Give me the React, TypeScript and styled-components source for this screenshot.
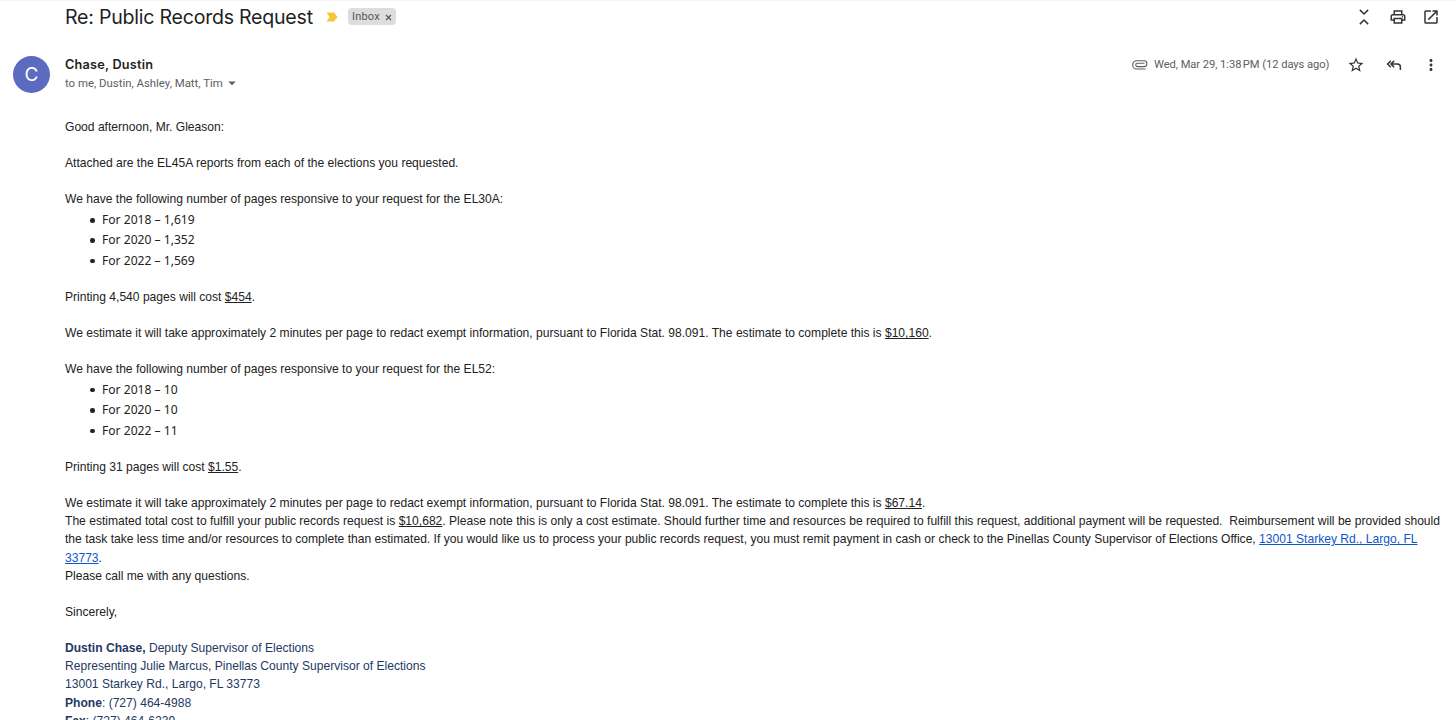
import * as React from "react";

import { MdArrowDropDown, MdMoreVert, MdOpenInNew, MdOutlinePrint, MdStarBorder } from "react-icons/md";
import styled, { createGlobalStyle } from "styled-components";

const GlobalStyle = createGlobalStyle`
    html, body {
        margin: 0;
        background: #ffffff;
        overflow: hidden;
    }
`;

const Page = styled.main`
    box-sizing: border-box;
    width: 1456px;
    height: 720px;
    overflow: hidden;
    background: #ffffff;
    border-top: 1px solid #f3f4f6;
    font-family: Roboto, Inter, sans-serif;
    color: #1f1f1f;
`;

const SubjectBar = styled.header`
    display: flex;
    align-items: center;
    height: 31px;
    padding: 0 16px 0 65px;
`;

const Subject = styled.h1`
    margin: 0;
    width: 248px;
    font-family: Inter, sans-serif;
    font-size: 19.6px;
    line-height: 26px;
    font-weight: 400;
    letter-spacing: -0.25px;
    white-space: nowrap;
`;

const ImportantMarker = styled.svg`
    width: 12px;
    height: 10px;
    margin-left: 13px;
`;

const LabelChip = styled.span`
    display: flex;
    align-items: center;
    justify-content: space-between;
    box-sizing: border-box;
    width: 48px;
    height: 17px;
    margin-left: 10px;
    padding: 0 4px;
    border-radius: 4px;
    background: #dddddd;
    color: #555555;
    font-size: 11px;
    line-height: 17px;
    letter-spacing: 0.2px;
`;

const ChipClose = styled.svg`
    width: 7px;
    height: 7px;
    margin-top: 1px;
`;

const Toolbar = styled.div<{ gap: number }>`
    display: flex;
    align-items: center;
    gap: ${p => p.gap}px;
    margin-left: auto;
    color: #333538;

    svg {
        width: 18px;
        height: 18px;
        display: block;
    }
`;

const SenderRow = styled.section`
    display: flex;
    height: 60px;
    padding: 24px 16px 0 13px;
    box-sizing: border-box;
`;

const Avatar = styled.div`
    width: 37px;
    height: 37px;
    border-radius: 50%;
    background: #5c6bc0;
    color: #ffffff;
    font-family: Inter, sans-serif;
    font-size: 19px;
    line-height: 38px;
    text-align: center;
`;

const Sender = styled.div`
    margin-left: 15px;
`;

const SenderName = styled.div`
    font-family: Inter, sans-serif;
    font-size: 12.7px;
    line-height: 18px;
    font-weight: 600;
    letter-spacing: 0.22px;
`;

const Recipients = styled.div`
    display: flex;
    align-items: center;
    font-size: 11.4px;
    line-height: 18px;
    color: #5e5e5e;
`;

const Meta = styled.div`
    display: flex;
    align-items: center;
    height: 18px;
    margin-left: auto;
    color: #5e5e5e;
    white-space: nowrap;
`;

const SentDate = styled.span`
    margin: 0 18px 0 6px;
    font-size: 11.2px;
    line-height: 18px;
    letter-spacing: -0.06px;
`;

const Body = styled.article`
    padding: 25.9px 0 0 65px;
    font-family: "Liberation Sans", Arial, sans-serif;
    font-size: 12.08px;
    line-height: 18.14px;
    color: #222222;
`;

const Line = styled.div`
    min-height: 18.14px;
    white-space: pre;
`;

const PageList = styled.ul`
    margin: 0 0 -1.5px;
    padding: 1.5px 0 0 25px;
    list-style: none;
    font-family: "Noto Sans", sans-serif;
    font-size: 12.1px;
    line-height: 20.4px;
`;

const PageItem = styled.li`
    display: flex;
    align-items: center;
    height: 20.4px;

    &::before {
        content: "";
        width: 4.5px;
        height: 4.5px;
        margin-right: 7.5px;
        border-radius: 50%;
        background: #222222;
    }
`;

const Address = styled.a`
    color: #1155cc;
    text-decoration: underline;
`;

const Signature = styled.div`
    color: #1f3864;
`;

const UnfoldLess = () => (
    <svg viewBox="0 0 24 24" fill="none" stroke="currentColor" strokeWidth="2">
        <path d="M6.5 2.5 12 8l5.500-5.500M6.500 21.500 12 16l5.500 5.500" />
    </svg>
);

const ReplyAll = () => (
    <svg viewBox="0 0 24 24" fill="none" stroke="currentColor" strokeWidth="2">
        <path d="M7.700 6.500 3.500 10.700l4.200 4.200M12.200 6.500 8 10.700l4.200 4.200M8.500 10.700H16.500a4 4 0 0 1 4 4v4" />
    </svg>
);

const Paperclip = () => (
    <svg width="16" height="10" viewBox="0 0 16 10" fill="none" stroke="currentColor" strokeWidth="1.1">
        <path d="M12.500 3.200H5.500a1.700 1.700 0 0 0 0 3.400H12a2.900 2.900 0 0 0 0-5.800H4.800a4.100 4.100 0 0 0 0 8.200H13.500" />
    </svg>
);

const PageCounts: React.FC<{ counts: Array<[number, string]> }> = ({ counts }) => (
    <PageList>
        {counts.map(([year, pages]) => <PageItem key={year}>{`For ${year} – ${pages}`}</PageItem>)}
    </PageList>
);

const App: React.FC<{}> = () => (
    <>
        <GlobalStyle />
        <Page>
            <SubjectBar>
                <Subject>Re: Public Records Request</Subject>
                <ImportantMarker viewBox="0 0 12 10">
                    <path d="M0.500 0.500H8L11.500 5L8 9.500H0.500L3.500 5Z" fill="#f6c638" />
                </ImportantMarker>
                <LabelChip>
                    <span>Inbox</span>
                    <ChipClose viewBox="0 0 7 7"><path d="M1 1l5 5M6 1L1 6" stroke="#555555" strokeWidth="1.1" /></ChipClose>
                </LabelChip>
                <Toolbar gap={15.5}>
                    <UnfoldLess />
                    <MdOutlinePrint />
                    <MdOpenInNew />
                </Toolbar>
            </SubjectBar>
            <SenderRow>
                <Avatar>C</Avatar>
                <Sender>
                    <SenderName>Chase, Dustin</SenderName>
                    <Recipients><span>to me, Dustin, Ashley, Matt, Tim</span><MdArrowDropDown size={18} /></Recipients>
                </Sender>
                <Meta>
                    <Paperclip />
                    <SentDate>Wed, Mar 29, 1:38{"\u202f"}PM (12 days ago)</SentDate>
                    <Toolbar gap={19.3}>
                        <MdStarBorder />
                        <ReplyAll />
                        <MdMoreVert />
                    </Toolbar>
                </Meta>
            </SenderRow>
            <Body>
                <Line>Good afternoon, Mr. Gleason:</Line>
                <Line />
                <Line>Attached are the EL45A reports from each of the elections you requested.</Line>
                <Line />
                <Line>We have the following number of pages responsive to your request for the EL30A:</Line>
                <PageCounts counts={[[2018, "1,619"], [2020, "1,352"], [2022, "1,569"]]} />
                <Line />
                <Line>Printing 4,540 pages will cost <u>$454</u>.</Line>
                <Line />
                <Line>We estimate it will take approximately 2 minutes per page to redact exempt information, pursuant to Florida Stat. 98.091. The estimate to complete this is <u>$10,160</u>.</Line>
                <Line />
                <Line>We have the following number of pages responsive to your request for the EL52:</Line>
                <PageCounts counts={[[2018, "10"], [2020, "10"], [2022, "11"]]} />
                <Line />
                <Line>Printing 31 pages will cost <u>$1.55</u>.</Line>
                <Line />
                <Line>We estimate it will take approximately 2 minutes per page to redact exempt information, pursuant to Florida Stat. 98.091. The estimate to complete this is <u>$67.14</u>.</Line>
                <Line>The estimated total cost to fulfill your public records request is <u>$10,682</u>. Please note this is only a cost estimate. Should further time and resources be required to fulfill this request, additional payment will be requested.  Reimbursement will be provided should</Line>
                <Line>the task take less time and/or resources to complete than estimated. If you would like us to process your public records request, you must remit payment in cash or check to the Pinellas County Supervisor of Elections Office, <Address>13001 Starkey Rd., Largo, FL</Address></Line>
                <Line><Address>33773</Address>.</Line>
                <Line>Please call me with any questions.</Line>
                <Line />
                <Line>Sincerely,</Line>
                <Line />
                <Signature>
                    <Line><b>Dustin Chase,</b> Deputy Supervisor of Elections</Line>
                    <Line>Representing Julie Marcus, Pinellas County Supervisor of Elections</Line>
                    <Line>13001 Starkey Rd., Largo, FL 33773</Line>
                    <Line><b>Phone</b>: (727) 464-4988</Line>
                    <Line><b>Fax</b>: (727) 464-6239</Line>
                </Signature>
            </Body>
        </Page>
    </>
);

export default App;
